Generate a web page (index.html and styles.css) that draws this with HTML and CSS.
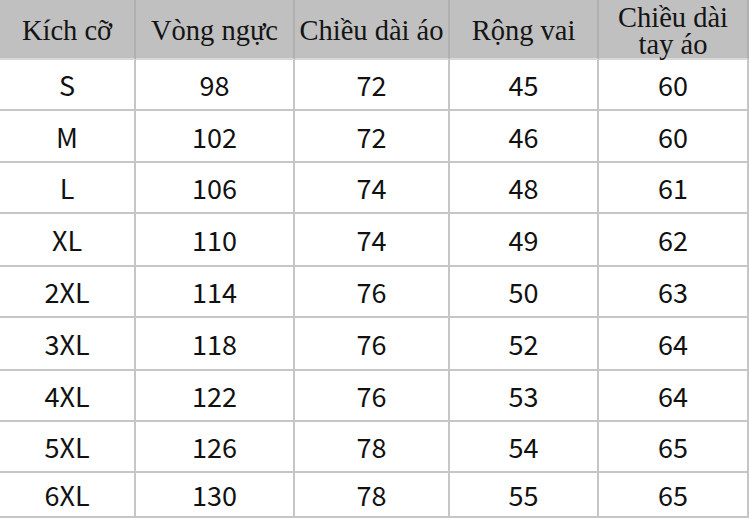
FILE: index.html
```html
<!DOCTYPE html>
<html lang="vi">
<head>
<meta charset="utf-8">
<title>Bảng kích cỡ</title>
<link rel="stylesheet" href="styles.css">
</head>
<body>
<div class="size-table">
  <div class="cell head">Kích cỡ</div>
  <div class="cell head">Vòng ngực</div>
  <div class="cell head">Chiều dài áo</div>
  <div class="cell head">Rộng vai</div>
  <div class="cell head two">Chiều dài<br>tay áo</div>

  <div class="cell">S</div><div class="cell">98</div><div class="cell">72</div><div class="cell">45</div><div class="cell">60</div>
  <div class="cell">M</div><div class="cell">102</div><div class="cell">72</div><div class="cell">46</div><div class="cell">60</div>
  <div class="cell">L</div><div class="cell">106</div><div class="cell">74</div><div class="cell">48</div><div class="cell">61</div>
  <div class="cell">XL</div><div class="cell">110</div><div class="cell">74</div><div class="cell">49</div><div class="cell">62</div>
  <div class="cell">2XL</div><div class="cell">114</div><div class="cell">76</div><div class="cell">50</div><div class="cell">63</div>
  <div class="cell">3XL</div><div class="cell">118</div><div class="cell">76</div><div class="cell">52</div><div class="cell">64</div>
  <div class="cell">4XL</div><div class="cell">122</div><div class="cell">76</div><div class="cell">53</div><div class="cell">64</div>
  <div class="cell">5XL</div><div class="cell">126</div><div class="cell">78</div><div class="cell">54</div><div class="cell">65</div>
  <div class="cell">6XL</div><div class="cell">130</div><div class="cell">78</div><div class="cell">55</div><div class="cell">65</div>
</div>
</body>
</html>
```
FILE: styles.css
```css
html, body {
  margin: 0;
  padding: 0;
  background: #ffffff;
}

.size-table {
  display: grid;
  width: 749px;
  grid-template-columns: 136px 159px 155px 149px 150px;
  grid-template-rows: 60px 51px 52px 51px 53px 51px 53px 51px 51px 45px;
  font-family: "Noto Sans CJK SC", "Noto Sans", sans-serif;
  font-size: 27px;
  color: #111111;
}

.cell {
  display: flex;
  align-items: center;
  justify-content: center;
  border-right: 2px solid #c6c6c6;
  border-bottom: 2px solid #c6c6c6;
  line-height: 1;
}

.head {
  background: #c0c0c0;
  border-right-color: #b0b0b0;
  border-bottom-color: #d8d8d8;
  font-family: "Liberation Serif", "Times New Roman", serif;
  font-size: 28.5px;
  color: #141414;
  padding-top: 5px;
}

.head.two {
  flex-direction: column;
  text-align: center;
  line-height: 27px;
  padding-top: 3px;
}
```
